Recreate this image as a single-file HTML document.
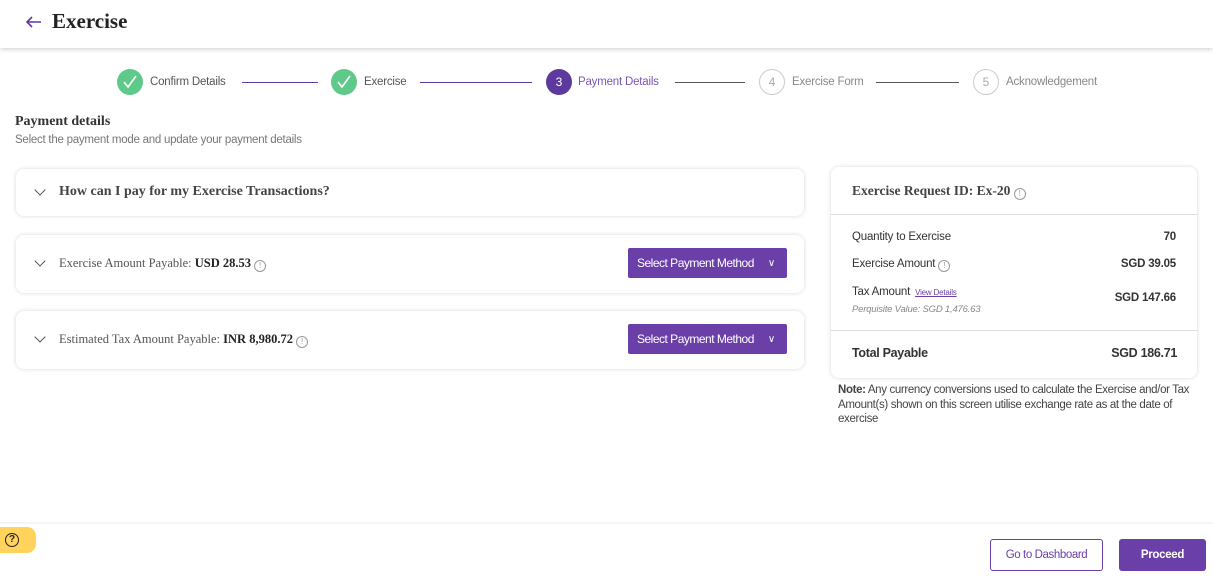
<!DOCTYPE html>
<html><head><meta charset="utf-8"><style>
*{box-sizing:border-box;margin:0;padding:0}
body{width:1213px;height:584px;overflow:hidden;background:#fff;font-family:"Liberation Sans",sans-serif;color:#333;position:relative}
.abs{position:absolute}
.serif{font-family:"Liberation Serif",serif}
.hdr{left:0;top:0;width:1213px;height:48px;background:#fff;box-shadow:0 2px 4px rgba(0,0,0,.15)}
.circ{width:26px;height:26px;border-radius:50%;display:flex;align-items:center;justify-content:center;font-size:12px}
.done{background:#5fc98a}
.cur{background:#5c3a9e;color:#fff}
.todo{border:1px solid #ccc;color:#aaa;background:#fff}
.lbl{font-size:11.5px;color:#555;top:75px;letter-spacing:-0.2px;line-height:14px}
.line{height:1px;top:82px}
.card{background:#fff;border-radius:8px;box-shadow:0 0 4px rgba(0,0,0,.16)}
.btn{background:#6a3fa8;color:#fff;font-size:12px;border-radius:2px;display:flex;align-items:center;padding-left:9px;letter-spacing:-0.5px}
.chev{width:8px;height:8px;border-right:1.5px solid #555;border-bottom:1.5px solid #555;transform:rotate(45deg)}
.info{display:inline-block;width:12px;height:12px;border:1px solid #999;border-radius:50%;font-size:8px;line-height:10px;text-align:center;color:#999;vertical-align:-1px;font-family:"Liberation Sans",sans-serif;font-weight:normal}
.r{font-size:11.5px;color:#333;letter-spacing:-0.2px}
</style></head><body>
<div class="abs hdr"></div>
<svg class="abs" style="left:25px;top:15px" width="18" height="14" viewBox="0 0 18 14"><path d="M16 7H2M7 2L2 7l5 5" fill="none" stroke="#5c3a9e" stroke-width="1.6"/></svg>
<div class="abs serif" style="left:52px;top:9px;font-size:21px;font-weight:bold;color:#222">Exercise</div>

<div class="abs circ done" style="left:117px;top:69px"><svg width="16" height="14" viewBox="0 0 16 14"><path d="M2 7l4 5 8-11" fill="none" stroke="#fff" stroke-width="1.6"/></svg></div>
<div class="abs lbl" style="left:150px">Confirm Details</div>
<div class="abs line" style="left:242px;width:76px;background:#5c3a9e"></div>
<div class="abs circ done" style="left:331px;top:69px"><svg width="16" height="14" viewBox="0 0 16 14"><path d="M2 7l4 5 8-11" fill="none" stroke="#fff" stroke-width="1.6"/></svg></div>
<div class="abs lbl" style="left:364px">Exercise</div>
<div class="abs line" style="left:420px;width:112px;background:#5c3a9e"></div>
<div class="abs circ cur" style="left:546px;top:69px">3</div>
<div class="abs lbl" style="left:578px;color:#7a55b8">Payment Details</div>
<div class="abs line" style="left:675px;width:70px;background:#555"></div>
<div class="abs circ todo" style="left:759px;top:69px">4</div>
<div class="abs lbl" style="left:792px;color:#888">Exercise Form</div>
<div class="abs line" style="left:876px;width:83px;background:#555"></div>
<div class="abs circ todo" style="left:973px;top:69px">5</div>
<div class="abs lbl" style="left:1006px;color:#888">Acknowledgement</div>

<div class="abs serif" style="left:15px;top:114px;font-size:14px;font-weight:bold;color:#333">Payment details</div>
<div class="abs" style="left:15px;top:134px;font-size:11.5px;color:#777;letter-spacing:-0.25px">Select the payment mode and update your payment details</div>

<div class="abs card" style="left:16px;top:169px;width:788px;height:47px"></div>
<div class="abs chev" style="left:36px;top:186px"></div>
<div class="abs serif" style="left:59px;top:184px;font-size:14px;font-weight:bold;color:#444">How can I pay for my Exercise Transactions?</div>

<div class="abs card" style="left:16px;top:235px;width:788px;height:58px"></div>
<div class="abs chev" style="left:36px;top:257px"></div>
<div class="abs serif" style="left:59px;top:256px;font-size:12.5px;color:#555">Exercise Amount Payable: <b style="color:#222">USD 28.53</b> <span class="info">!</span></div>
<div class="abs btn" style="left:628px;top:248px;width:159px;height:30px">Select Payment Method<span style="margin-left:14px;font-size:10px">&#8744;</span></div>

<div class="abs card" style="left:16px;top:311px;width:788px;height:58px"></div>
<div class="abs chev" style="left:36px;top:333px"></div>
<div class="abs serif" style="left:59px;top:332px;font-size:12.5px;color:#555">Estimated Tax Amount Payable: <b style="color:#222">INR 8,980.72</b> <span class="info">!</span></div>
<div class="abs btn" style="left:628px;top:324px;width:159px;height:30px">Select Payment Method<span style="margin-left:14px;font-size:10px">&#8744;</span></div>

<div class="abs card" style="left:831px;top:167px;width:366px;height:211px"></div>
<div class="abs serif" style="left:852px;top:183px;font-size:13.5px;font-weight:bold;color:#444">Exercise Request ID: Ex-20 <span class="info">!</span></div>
<div class="abs" style="left:831px;top:214px;width:366px;height:1px;background:#ddd"></div>
<div class="abs r" style="left:852px;top:231px">Quantity to Exercise</div>
<div class="abs r" style="right:37px;top:231px;font-weight:bold">70</div>
<div class="abs r" style="left:852px;top:258px">Exercise Amount <span class="info">!</span></div>
<div class="abs r" style="right:37px;top:258px;font-weight:bold">SGD 39.05</div>
<div class="abs r" style="left:852px;top:286px">Tax Amount <span style="font-size:8px;color:#6a3fa8;text-decoration:underline;margin-left:2px">View Details</span></div>
<div class="abs" style="left:852px;top:304px;font-size:9.5px;font-style:italic;color:#888;letter-spacing:-0.2px">Perquisite Value: SGD 1,476.63</div>
<div class="abs r" style="right:37px;top:292px;font-weight:bold">SGD 147.66</div>
<div class="abs" style="left:831px;top:330px;width:366px;height:1px;background:#ddd"></div>
<div class="abs" style="left:852px;top:346px;font-size:12.5px;font-weight:bold;color:#333;letter-spacing:-0.3px">Total Payable</div>
<div class="abs" style="right:36px;top:346px;font-size:12.5px;font-weight:bold;color:#333;letter-spacing:-0.3px">SGD 186.71</div>
<div class="abs" style="left:838px;top:383px;width:352px;font-size:11.5px;line-height:14.5px;color:#444;letter-spacing:-0.35px"><b>Note:</b> Any currency conversions used to calculate the Exercise and/or Tax Amount(s) shown on this screen utilise exchange rate as at the date of exercise</div>

<div class="abs" style="left:0;top:522px;width:1213px;height:3px;background:linear-gradient(#f0f0f0,#fff)"></div>
<div class="abs" style="left:0;top:527px;width:36px;height:26px;background:#ffd35c;border-radius:0 9px 9px 0"></div>
<div class="abs" style="left:5px;top:533px;width:14px;height:14px;border:1.3px solid #222;border-radius:50%;font-size:10px;line-height:12px;text-align:center;color:#222;font-weight:bold">?</div>
<div class="abs" style="left:990px;top:539px;width:113px;height:32px;border:1.5px solid #6a3fa8;border-radius:3px;font-size:11.5px;color:#6a3fa8;display:flex;align-items:center;justify-content:center;letter-spacing:-0.4px">Go to Dashboard</div>
<div class="abs" style="left:1119px;top:539px;width:87px;height:32px;background:#6a3fa8;border-radius:3px;font-size:11.5px;color:#fff;font-weight:bold;display:flex;align-items:center;justify-content:center;letter-spacing:-0.3px">Proceed</div>
</body></html>
